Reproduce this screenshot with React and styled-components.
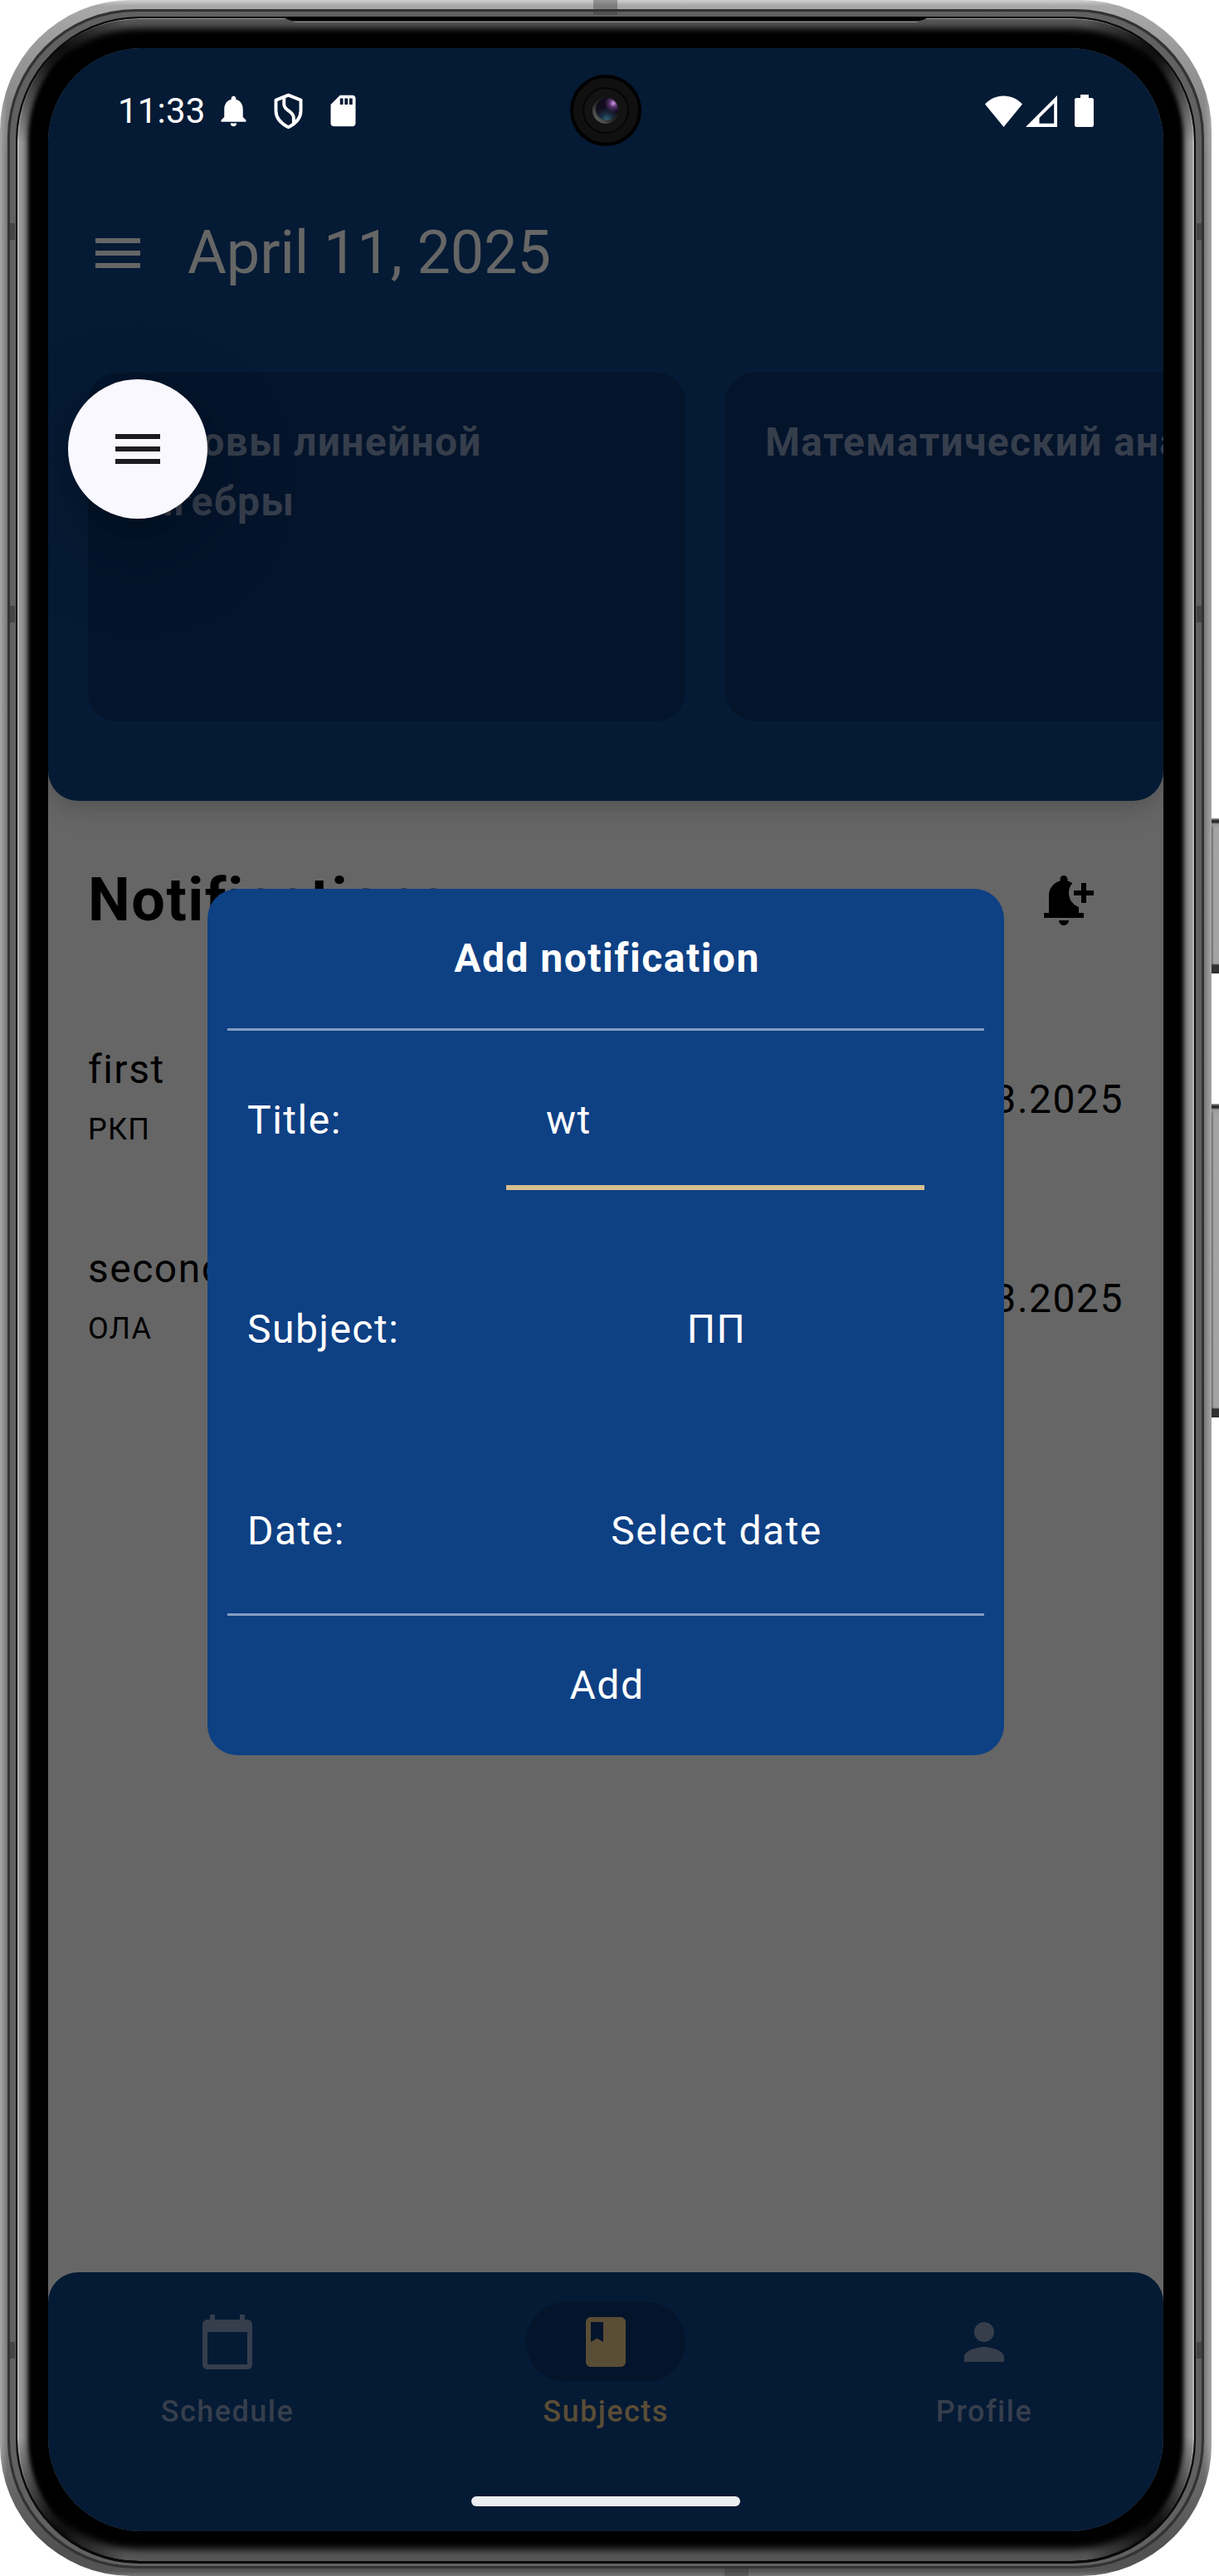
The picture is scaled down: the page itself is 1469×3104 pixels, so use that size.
import React from "react";
import styled, { createGlobalStyle, css } from "styled-components";
import {
  MdMenu,
  MdNotifications,
  MdSdStorage,
  MdNotificationAdd,
  MdCalendarToday,
  MdBook,
  MdPerson,
} from "react-icons/md";

const color = {
  navy: "#051a34",
  navyDeep: "#04142b",
  dialog: "#0e4084",
  scrim: "#666666",
  muted: "#363e4c",
  gold: "#d6bf8d",
  goldDim: "#5a4d36",
  divider: "#869cc2",
};

const GlobalStyle = createGlobalStyle`
  * { box-sizing: border-box; }
  body { margin: 0; background: #fff; font-family: Roboto, "Noto Sans", sans-serif; }
  svg { display: block; flex: none; }
`;

const Page = styled.div`
  display: flex;
  width: 1469px;
  height: 3104px;
  overflow: hidden;
`;

/* ---------- device frame ---------- */

const Shell = styled.div`
  position: relative;
  width: 1460px;
  height: 3104px;
  padding: 11px 9px 9px;
  border-radius: 158px;
  background:
    linear-gradient(180deg, #cfcfcf 0, #a8a8a8 7px, rgba(170, 170, 170, 0.85) 30px, rgba(150, 150, 150, 0) 190px),
    linear-gradient(0deg, #777 0, #555 6px, rgba(70, 70, 70, 0.8) 30px, rgba(80, 80, 80, 0) 160px),
    linear-gradient(90deg, #a6a6a6 0, #777 9px, #777 1451px, #a6a6a6 1460px);
`;

const Groove = styled.div`
  height: 100%;
  padding: 3px;
  border-radius: 154px;
  background: #333;
`;

const Band = styled.div`
  height: 100%;
  padding: 6px 7px 3px;
  border-radius: 152px;
  background: #616161;
`;

const Seam = styled.div`
  height: 100%;
  padding: 2px 2px 3px;
  border-radius: 149px;
  background: #0a0a0a;
`;

const Glass = styled.div`
  position: relative;
  height: 100%;
  padding: 36px 37px 39px;
  border-radius: 147px;
  background: #000;

  &::before,
  &::after {
    content: "";
    position: absolute;
    inset: 0;
    border-radius: inherit;
  }
  &::before {
    box-shadow:
      inset 2px 0 0 #b4b4b4, inset -2px 0 0 #b4b4b4,
      inset 8px 0 4px #999, inset -8px 0 4px #999,
      inset 13px 0 4px #6e6e6e, inset -13px 0 4px #6e6e6e;
    mask-image: linear-gradient(180deg, transparent 34px, #000 150px, #000 calc(100% - 150px), transparent calc(100% - 34px));
  }
  &::after {
    box-shadow: inset 0 1px 0 #999, inset 0 12px 9px #565656, inset 0 -14px 10px #565656;
    mask-image: linear-gradient(90deg, transparent 40px, #000 130px, #000 calc(100% - 130px), transparent calc(100% - 40px));
  }
`;

const Earpiece = styled.div`
  position: absolute;
  z-index: 1;
  left: 338px;
  top: 20px;
  width: 784px;
  height: 7px;
  background: linear-gradient(180deg, #000 5px, #8c8c8c 6px);
  clip-path: polygon(0 0, 100% 0, calc(100% - 18px) 100%, 18px 100%);
`;

const AntennaMark = styled.span`
  position: absolute;
  background: rgba(50, 50, 50, 0.6);
  ${({ $side, $at }) =>
    $side === "left" || $side === "right"
      ? css`
          ${$side}: 9px;
          top: ${$at}px;
          width: 9px;
          height: 20px;
        `
      : css`
          ${$side}: 0;
          left: ${$at}px;
          width: 29px;
          height: ${$side === "top" ? 18 : 12}px;
          opacity: 0.6;
        `}
`;

const SideKeys = styled.div`
  width: 9px;
  padding-top: 986px;
  display: flex;
  flex-direction: column;
  gap: 157px;
`;

const SideKey = styled.div`
  height: ${({ $height }) => $height}px;
  background:
    linear-gradient(180deg, #aaa 0, #222 3px, #333 5px, #999 7px, transparent 12px),
    linear-gradient(0deg, #303030 10px, transparent 12px),
    linear-gradient(90deg, #666, #a3a3a3 3px);
`;

/* ---------- screen ---------- */

const Screen = styled.div`
  position: relative;
  z-index: 1;
  width: 1344px;
  height: 2992px;
  display: flex;
  flex-direction: column;
  overflow: hidden;
  border-radius: 113px;
  background: ${color.scrim};
`;

const Header = styled.header`
  position: relative;
  height: 907px;
  border-radius: 0 0 36px 36px;
  background: ${color.navy};
  box-shadow: 0 6px 24px rgba(0, 0, 0, 0.16), 0 10px 50px rgba(0, 0, 0, 0.05);
`;

const StatusBar = styled.div`
  height: 151px;
  padding: 0 84px 0 84px;
  display: flex;
  align-items: center;
  justify-content: space-between;
  color: #fff;
`;

const StatusGroup = styled.div`
  display: flex;
  align-items: center;
  gap: ${({ $gap }) => $gap}px;
`;

const Clock = styled.span`
  width: 95.5px;
  font-size: 42px;
  line-height: 48px;
  letter-spacing: 0.2px;
  white-space: nowrap;
`;

const AppBar = styled.div`
  height: 192px;
  padding-left: 48px;
  display: flex;
  align-items: center;
  gap: 48px;
  color: ${color.scrim};
`;

const AppTitle = styled.h1`
  margin: 0;
  font-size: 72px;
  font-weight: 400;
  line-height: 96px;
  letter-spacing: -0.12px;
`;

const CardRow = styled.div`
  margin-top: 48px;
  padding-left: 48px;
  display: flex;
  gap: 48px;
  overflow: hidden;
`;

const SubjectCard = styled.article`
  flex: none;
  width: 720px;
  height: 420px;
  padding: 48px;
  border-radius: 36px;
  background: ${color.navyDeep};
  color: ${color.muted};
  font-size: 48px;
  font-weight: 700;
  line-height: 72px;
  letter-spacing: 1.3px;
`;

const Fab = styled.button`
  position: absolute;
  left: 24px;
  top: 399px;
  width: 168px;
  height: 168px;
  padding: 0;
  border: 0;
  border-radius: 50%;
  display: flex;
  align-items: center;
  justify-content: center;
  background: #f9f8ff;
  color: #1b1b20;
  box-shadow: 0 8px 20px rgba(0, 0, 0, 0.08), 0 36px 100px 20px rgba(0, 0, 0, 0.16);
`;

const Content = styled.main`
  height: 1773px;
  padding: 72px 48px 0;
`;

const SectionHead = styled.div`
  height: 96px;
  padding-right: 36px;
  display: flex;
  align-items: center;
  justify-content: space-between;
  color: #000;
`;

const SectionTitle = styled.h2`
  margin: 0;
  font-size: 72px;
  font-weight: 700;
  line-height: 96px;
  letter-spacing: 1.5px;
`;

const NoticeRow = styled.div`
  height: 240px;
  display: flex;
  align-items: center;
  justify-content: space-between;
  color: #000;
  font-size: 48px;
  line-height: 72px;
  letter-spacing: 1.5px;
`;

const NoticeList = styled.div`
  margin-top: 72px;
`;

const NoticeText = styled.div`
  display: flex;
  flex-direction: column;
`;

const NoticeCode = styled.span`
  font-size: 36px;
  line-height: 72px;
  letter-spacing: 1.2px;
`;

const BottomNav = styled.nav`
  height: 312px;
  padding-top: 36px;
  display: flex;
  flex-direction: column;
  align-items: center;
  border-radius: 36px 36px 0 0;
  background: ${color.navy};
`;

const NavItems = styled.div`
  width: 100%;
  display: grid;
  grid-template-columns: repeat(3, 1fr);
  gap: 24px;
`;

const NavItem = styled.div`
  display: flex;
  flex-direction: column;
  align-items: center;
  gap: 12px;
  color: ${({ $active }) => ($active ? color.goldDim : color.muted)};
  font-size: 36px;
  font-weight: 500;
  line-height: 48px;
  letter-spacing: 1.5px;
`;

const NavPill = styled.div`
  width: 192px;
  height: 96px;
  border-radius: 48px;
  display: flex;
  align-items: center;
  justify-content: center;
  background: ${({ $active }) => ($active ? color.navyDeep : "transparent")};
`;

const HomeBar = styled.div`
  width: 324px;
  height: 12px;
  margin-top: 78px;
  border-radius: 6px;
  background: #ebedf0;
`;

/* ---------- dialog ---------- */

const Dialog = styled.section`
  position: absolute;
  left: 192px;
  top: 1013px;
  width: 960px;
  height: 1044px;
  padding: 0 24px;
  display: flex;
  flex-direction: column;
  border-radius: 36px;
  background: ${color.dialog};
  color: #fff;
  font-size: 48px;
  line-height: 72px;
  letter-spacing: 1.5px;
`;

const DialogBar = styled.div`
  height: 168px;
  padding-left: 3px;
  display: flex;
  align-items: center;
  justify-content: center;
  font-weight: ${({ $bold }) => ($bold ? 700 : 400)};
`;

const Rule = styled.div`
  height: 3px;
  background: ${color.divider};
`;

const Form = styled.div`
  height: 702px;
  padding: 24px 72px 0 24px;
`;

const Field = styled.div`
  height: ${({ $height }) => $height}px;
  margin-bottom: ${({ $after }) => $after}px;
  display: flex;
  align-items: center;
  justify-content: space-between;
`;

const FieldValue = styled.div`
  width: 504px;
  padding-left: 3px;
  text-align: center;
`;

const TextInput = styled(FieldValue)`
  height: 168px;
  padding: 48px 48px 0;
  border-bottom: 6px solid ${color.gold};
  text-align: left;
`;

/* ---------- drawings ---------- */

const ShieldIcon = () => (
  <svg width="45" height="45" viewBox="0 0 24 24" fill="none" stroke="#fff" strokeWidth="2.1" strokeLinejoin="round">
    <path d="M12 1.9 4 5.1V12c0 4.7 3.4 8.2 8 10.6 4.6-2.4 8-5.9 8-10.6V5.1Z" />
    <path d="M9.2 3.6v4.2c0 4 6.2 4.600 6.200 8.600v3.400" />
  </svg>
);

const WifiIcon = () => (
  <svg width="45" height="38" viewBox="0 0 45 38" fill="#fff">
    <path d="M22.500 38 0 10.600C6 4 14 .5 22.500.5S39 4 45 10.600Z" />
  </svg>
);

const SignalIcon = () => (
  <svg width="38" height="38" viewBox="0 0 38 38" fill="#fff" fillRule="evenodd">
    <path d="M0 38 38 0V38ZM16.500 33.800H34.200V9.500L16.500 27Z" />
  </svg>
);

const BatteryIcon = () => (
  <svg width="23" height="39" viewBox="0 0 23 39" fill="#fff">
    <path d="M7 0h10v4h3.500A2.500 2.500 0 0 1 23 6.500v30a2.500 2.500 0 0 1-2.500 2.500h-18A2.500 2.500 0 0 1 0 36.500v-30A2.500 2.500 0 0 1 2.500 4H7Z" />
  </svg>
);

const Camera = styled.div`
  position: absolute;
  left: 629px;
  top: 32px;
  width: 86px;
  height: 86px;
  border: 4px solid #010101;
  border-radius: 50%;
  display: flex;
  align-items: center;
  justify-content: center;
  background: #101010;
`;

const LensRing = styled.div`
  width: 56px;
  height: 56px;
  border: 2px solid #050505;
  border-radius: 50%;
  display: flex;
  align-items: center;
  justify-content: center;
  background: #131313;
`;

const LensBezel = styled.div`
  width: 32px;
  height: 32px;
  padding: 1px 1px 3px 4px;
  border-radius: 50%;
  background: linear-gradient(45deg, #666 10%, #2a2a2a 40%, #111 80%);
`;

const Lens = styled.div`
  width: 27px;
  height: 27px;
  border-radius: 50%;
  background:
    radial-gradient(circle at 78% 24%, #cf9be2 0, rgba(130, 75, 160, 0.6) 16%, rgba(50, 20, 70, 0) 36%),
    radial-gradient(circle at 48% 96%, #2f5f76 0, rgba(25, 50, 70, 0.7) 28%, rgba(10, 15, 30, 0) 52%),
    #120c1c;
`;

const subjects = ["Основы линейной алгебры", "Математический анализ"];

const notices = [
  { title: "first", code: "РКП", date: "28.03.2025" },
  { title: "second", code: "ОЛА", date: "28.03.2025" },
];

const tabs = [
  { label: "Schedule", Icon: MdCalendarToday },
  { label: "Subjects", Icon: MdBook, active: true },
  { label: "Profile", Icon: MdPerson },
];

const marks = [
  ["left", 269], ["left", 730], ["left", 2822],
  ["right", 269], ["right", 730], ["right", 2822],
  ["top", 715], ["bottom", 873],
];

export default function App() {
  return (
    <Page>
      <GlobalStyle />
      <Shell>
        <Groove>
          <Band>
            <Seam>
              <Glass>
                <Screen>
                  <Header>
                    <StatusBar>
                      <StatusGroup $gap={21}>
                        <Clock>11:33</Clock>
                        <MdNotifications size={45} />
                        <ShieldIcon />
                        <MdSdStorage size={45} />
                      </StatusGroup>
                      <StatusGroup $gap={21}>
                        <StatusGroup $gap={4}>
                          <WifiIcon />
                          <SignalIcon />
                        </StatusGroup>
                        <BatteryIcon />
                      </StatusGroup>
                    </StatusBar>
                    <Camera>
                      <LensRing>
                        <LensBezel>
                          <Lens />
                        </LensBezel>
                      </LensRing>
                    </Camera>
                    <AppBar>
                      <MdMenu size={72} />
                      <AppTitle>April 11, 2025</AppTitle>
                    </AppBar>
                    <CardRow>
                      {subjects.map((name) => (
                        <SubjectCard key={name}>{name}</SubjectCard>
                      ))}
                    </CardRow>
                    <Fab aria-label="Menu">
                      <MdMenu size={72} />
                    </Fab>
                  </Header>
                  <Content>
                    <SectionHead>
                      <SectionTitle>Notifications</SectionTitle>
                      <MdNotificationAdd size={72} />
                    </SectionHead>
                    <NoticeList>
                      {notices.map((n) => (
                        <NoticeRow key={n.title}>
                          <NoticeText>
                            <span>{n.title}</span>
                            <NoticeCode>{n.code}</NoticeCode>
                          </NoticeText>
                          <span>{n.date}</span>
                        </NoticeRow>
                      ))}
                    </NoticeList>
                  </Content>
                  <BottomNav>
                    <NavItems>
                      {tabs.map(({ label, Icon, active }) => (
                        <NavItem key={label} $active={active}>
                          <NavPill $active={active}>
                            <Icon size={72} />
                          </NavPill>
                          <span>{label}</span>
                        </NavItem>
                      ))}
                    </NavItems>
                    <HomeBar />
                  </BottomNav>
                  <Dialog>
                    <DialogBar $bold>Add notification</DialogBar>
                    <Rule />
                    <Form>
                      <Field $height={168} $after={96}>
                        <span>Title:</span>
                        <TextInput>wt</TextInput>
                      </Field>
                      <Field $height={144} $after={99}>
                        <span>Subject:</span>
                        <FieldValue>ПП</FieldValue>
                      </Field>
                      <Field $height={144} $after={0}>
                        <span>Date:</span>
                        <FieldValue>Select date</FieldValue>
                      </Field>
                    </Form>
                    <Rule />
                    <DialogBar>Add</DialogBar>
                  </Dialog>
                </Screen>
              </Glass>
            </Seam>
          </Band>
        </Groove>
        <Earpiece />
        {marks.map(([side, at]) => (
          <AntennaMark key={side + at} $side={side} $at={at} />
        ))}
      </Shell>
      <SideKeys>
        <SideKey $height={187} />
        <SideKey $height={378} />
      </SideKeys>
    </Page>
  );
}
